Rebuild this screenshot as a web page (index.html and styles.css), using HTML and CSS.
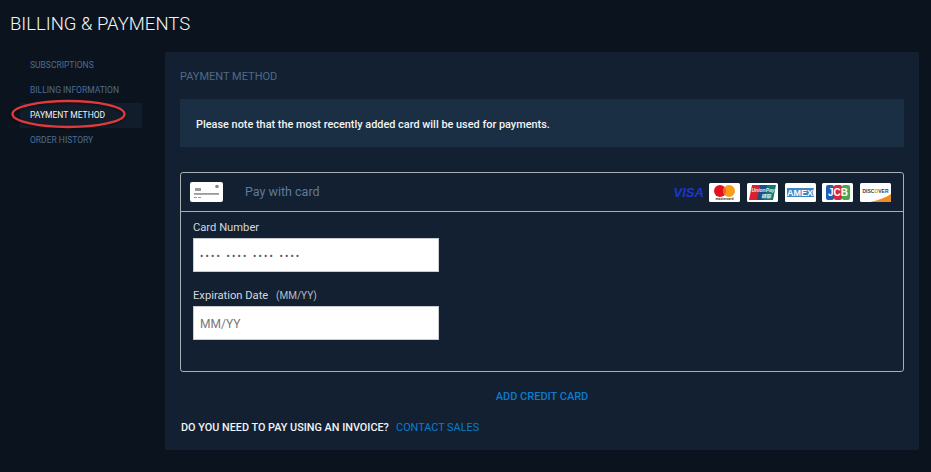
FILE: index.html
```html
<!DOCTYPE html>
<html lang="en">
<head>
<meta charset="utf-8">
<title>Billing &amp; Payments</title>
<link rel="stylesheet" href="styles.css">
</head>
<body>
<h1 class="title">BILLING &amp; PAYMENTS</h1>
<div class="layout">
  <nav class="side">
    <a class="nav-item">SUBSCRIPTIONS</a>
    <a class="nav-item">BILLING INFORMATION</a>
    <a class="nav-item active">PAYMENT METHOD</a>
    <a class="nav-item">ORDER HISTORY</a>
    <svg class="ring" width="118" height="32" viewBox="0 0 118 32"><ellipse cx="58.500" cy="15" rx="56" ry="13" fill="none" stroke="#e03a3d" stroke-width="2.400"/></svg>
  </nav>
  <main class="panel">
    <h2 class="panel-title">PAYMENT METHOD</h2>
    <div class="notice">Please note that the most recently added card will be used for payments.</div>
    <section class="card">
      <header class="card-head">
        <svg class="card-icon" width="33" height="20" viewBox="0 0 33 20"><rect width="33" height="20" rx="2" fill="#fff"/><rect x="5" y="6" width="6" height="3" fill="#9a9a9a"/><circle cx="27" cy="4.500" r="1.800" fill="#8a8a8a"/><rect x="4" y="11" width="25" height="1.800" fill="#9a9a9a"/><rect x="4" y="15" width="3" height="1" fill="#999"/><rect x="8" y="15" width="3" height="1" fill="#999"/></svg>
        <span class="pay-label">Pay with card</span>
        <div class="brands">
          <span class="visa">VISA</span>
          <svg class="brand" width="31" height="19" viewBox="0 0 31 19"><rect width="31" height="19" rx="1.500" fill="#fff"/><circle cx="11" cy="8" r="6" fill="#e3101e"/><circle cx="20" cy="8" r="6" fill="#f79e1b"/><path d="M15.500 4a6 6 0 0 1 0 8a6 6 0 0 1 0-8z" fill="#f2641f"/><text x="15.500" y="17" text-anchor="middle" class="mc-text">mastercard</text></svg>
          <svg class="brand" width="31" height="19" viewBox="0 0 31 19"><rect width="31" height="19" rx="1.500" fill="#fff"/><path d="M5 2h10l-3 15H2z" fill="#d8232f"/><path d="M13 2h9l-3 15h-9z" fill="#1a4f8a"/><path d="M20 2h9l-3 15h-9z" fill="#0e7a78"/><text x="16" y="8.500" text-anchor="middle" class="up-text">UnionPay</text><text x="19" y="14.500" text-anchor="middle" class="up-text">银联</text></svg>
          <svg class="brand" width="31" height="19" viewBox="0 0 31 19"><rect width="31" height="19" rx="1.500" fill="#fff"/><path d="M2 5h27l-1.500 4.500L29 14H2z" fill="#3f86c6"/><text x="15" y="12.600" text-anchor="middle" class="amex-text">AMEX</text></svg>
          <svg class="brand" width="31" height="19" viewBox="0 0 31 19"><rect width="31" height="19" rx="1.500" fill="#fff"/><rect x="4" y="2" width="8" height="15" rx="2" fill="#1e5fb4"/><rect x="12" y="2" width="8" height="15" rx="2" fill="#d8263a"/><rect x="20" y="2" width="8" height="15" rx="2" fill="#4aa84a"/><text x="16" y="13" text-anchor="middle" class="jcb-text">JCB</text></svg>
          <svg class="brand" width="31" height="19" viewBox="0 0 31 19"><rect width="31" height="19" rx="1.500" fill="#fff"/><path d="M10 19C19 17 26 14.500 31 11v6.500a1.500 1.500 0 0 1-1.500 1.500z" fill="#f08a24"/><text x="15.500" y="9.500" text-anchor="middle" class="disc-text">DISC<tspan class="disc-o">O</tspan>VER</text></svg>
        </div>
      </header>
      <div class="card-body">
        <div class="field">
          <label class="label">Card Number</label>
          <div class="input dots">•••• •••• •••• ••••</div>
        </div>
        <div class="field">
          <label class="label">Expiration Date <span class="hint">(MM/YY)</span></label>
          <div class="input placeholder">MM/YY</div>
        </div>
      </div>
    </section>
    <a class="add">ADD CREDIT CARD</a>
    <p class="invoice">DO YOU NEED TO PAY USING AN INVOICE? <a class="contact">CONTACT SALES</a></p>
  </main>
</div>
</body>
</html>
```
FILE: styles.css
```css
* { box-sizing: border-box; }
html, body { height: 100%; }
body {
  margin: 0;
  overflow: hidden;
  background: #0b141e;
  font-family: Roboto, "Liberation Sans", sans-serif;
  color: #fff;
}
.title {
  margin: 0;
  padding: 13px 0 0 10px;
  height: 52px;
  font-size: 18.500px;
  line-height: 22px;
  font-weight: 300;
  color: #f4f6f8;
}
.layout { display: flex; align-items: flex-start; }
.side {
  position: relative;
  width: 165px;
  padding-top: 0.500px;
  flex: none;
}
.nav-item {
  display: block;
  width: 142px;
  height: 25px;
  padding-left: 30px;
  font-size: 8.500px;
  line-height: 25px;
  color: #4d6d96;
}
.active {
  width: 122px;
  margin-left: 20px;
  padding-left: 10px;
  background: #111d2a;
  color: #f0f3f6;
}
.ring {
  position: absolute;
  left: 10px;
  top: 47px;
  overflow: visible;
  filter: drop-shadow(0 1px 1px rgba(0, 0, 0, 0.5));
}
.panel {
  width: 754px;
  height: 398px;
  padding: 18px 15px 0;
  background: #122032;
  border-radius: 2px;
}
.panel-title {
  margin: 0 0 16px;
  height: 13px;
  font-size: 11px;
  line-height: 13px;
  font-weight: 400;
  color: #4f6a89;
}
.notice {
  height: 48px;
  padding: 0 16px;
  background: #1a2e44;
  font-size: 10.900px;
  font-weight: 500;
  line-height: 51px;
  color: #f2f4f7;
}
.card {
  margin-top: 25px;
  height: 200px;
  border: 1px solid #a7aeb6;
  border-radius: 3px;
}
.card-head {
  display: flex;
  align-items: center;
  height: 39px;
  padding: 0 12px 0 9px;
  border-bottom: 1px solid #a7aeb6;
}
.card-icon { flex: none; }
.pay-label {
  margin-left: 22px;
  margin-bottom: 1px;
  font-size: 12.500px;
  line-height: 16px;
  color: #5f7a9a;
}
.brands { display: flex; align-items: center; gap: 6.700px; margin-left: auto; }
.brand { display: block; flex: none; }
.visa {
  width: 30px;
  margin-right: -1px;
  font-family: "Liberation Sans", sans-serif;
  font-size: 13px;
  font-weight: 700;
  font-style: italic;
  color: #1b38c8;
}
.mc-text { font-size: 3.500px; font-weight: 700; fill: #444; }
.up-text { font-family: "Liberation Sans", "Noto Sans CJK SC", sans-serif; font-size: 5px; font-weight: 700; font-style: italic; fill: #e8eef0; }
.amex-text { font-family: "Liberation Sans", sans-serif; font-size: 9px; font-weight: 700; fill: #fff; }
.jcb-text { font-family: "Liberation Sans", sans-serif; font-size: 10px; font-weight: 700; fill: #fff; }
.disc-text { font-family: "Liberation Sans", sans-serif; font-size: 5px; font-weight: 700; fill: #444; }
.disc-o { fill: #f08a24; }
.card-body { padding: 9px 12px 0; }
.field { margin-bottom: 17px; }
.label {
  display: block;
  height: 17px;
  font-size: 11.200px;
  line-height: 14px;
  color: #d3d8de;
}
.hint { margin-left: 5px; font-size: 10px; color: #b7bfc8; }
.input {
  width: 246px;
  height: 34px;
  padding-left: 6px;
  background: #fff;
  border: 1px solid #c9ccd0;
  line-height: 34px;
}
.dots { font-size: 10px; line-height: 35px; letter-spacing: 2.100px; color: #555; }
.placeholder { font-size: 12px; color: #777; }
.add {
  display: block;
  margin-top: 18px;
  text-align: center;
  font-size: 11px;
  line-height: 13px;
  font-weight: 500;
  color: #0b7cce;
}
.invoice {
  margin: 18px 0 0 1px;
  font-size: 10.850px;
  line-height: 13px;
  font-weight: 500;
  color: #f2f4f7;
}
.contact { margin-left: 4.500px; font-weight: 400; color: #0b7cce; }
```
